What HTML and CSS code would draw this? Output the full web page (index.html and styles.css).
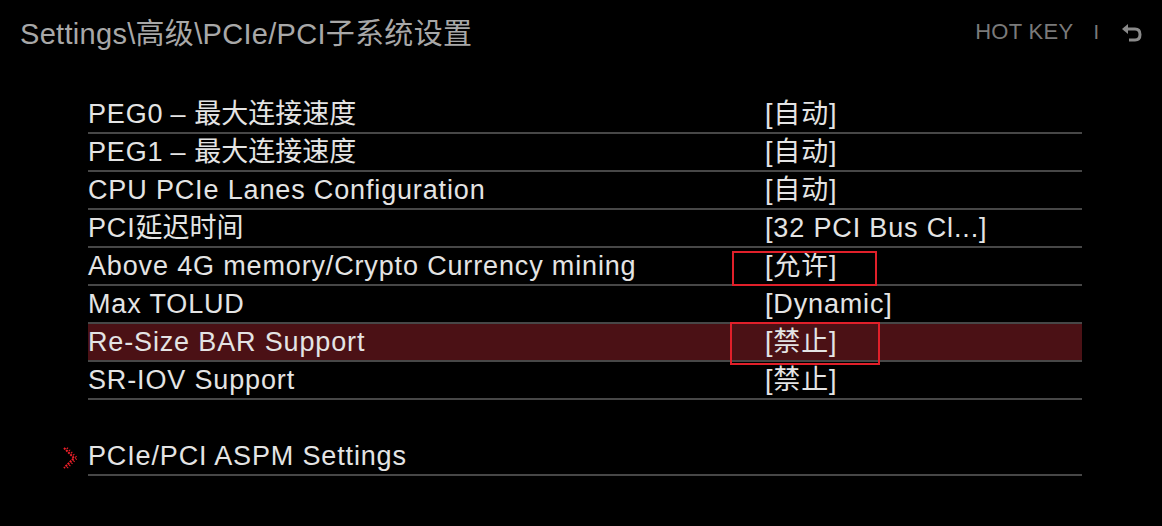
FILE: index.html
```html
<!DOCTYPE html>
<html lang="zh-CN">
<head>
<meta charset="utf-8">
<title>PCIe/PCI子系统设置</title>
<link rel="stylesheet" href="styles.css">
</head>
<body>
<header class="topbar">
  <div class="crumb">Settings\高级\PCIe/PCI子系统设置</div>
  <div class="hotkey">
    <span class="hk-label">HOT KEY</span>
    <span class="hk-sep">I</span>
    <svg class="hk-back" width="22" height="20" viewBox="0 0 22 20">
      <path d="M3 6 H14 Q19 6 19 11.5 Q19 17 14 17 H8" fill="none" stroke="#8a8a8a" stroke-width="3"/>
      <path d="M1 6 L7 1 L7 11 Z" fill="#8a8a8a"/>
    </svg>
  </div>
</header>

<main class="menu">
  <div class="row"><span class="label">PEG0<span class="dash">–</span><span class="cjk">最大连接速度</span></span><span class="value">[自动]</span></div>
  <div class="row"><span class="label">PEG1<span class="dash">–</span><span class="cjk">最大连接速度</span></span><span class="value">[自动]</span></div>
  <div class="row"><span class="label">CPU PCIe Lanes Configuration</span><span class="value">[自动]</span></div>
  <div class="row"><span class="label">PCI<span class="cjk">延迟时间</span></span><span class="value">[32 PCI Bus Cl...]</span></div>
  <div class="row"><span class="label">Above 4G memory/Crypto Currency mining</span><span class="value">[允许]<span class="mark mark-a"></span></span></div>
  <div class="row"><span class="label">Max TOLUD</span><span class="value">[Dynamic]</span></div>
  <div class="row row-active"><span class="label">Re-Size BAR Support</span><span class="value">[禁止]<span class="mark mark-b"></span></span></div>
  <div class="row"><span class="label">SR-IOV Support</span><span class="value">[禁止]</span></div>

  <div class="submenu">
    <svg class="chev" width="16" height="24" viewBox="0 0 16 24">
      <polyline points="2,2 12,12 2,22" fill="none" stroke="#f0202a" stroke-width="2" stroke-dasharray="2 1"/>
      <polyline points="5,2 15,12 5,22" fill="none" stroke="#f0202a" stroke-width="2" stroke-dasharray="1 2"/>
    </svg>
    <div class="row sub-row"><span class="label">PCIe/PCI ASPM Settings</span></div>
  </div>
</main>
</body>
</html>
```

FILE: styles.css
```css
* { box-sizing: border-box; }

html, body {
  margin: 0;
  padding: 0;
  background: #000;
}

body {
  width: 1162px;
  height: 526px;
  overflow: hidden;
  font-family: "Liberation Sans", "Noto Sans CJK SC", sans-serif;
  color: #e2e2e2;
}

.topbar {
  display: flex;
  justify-content: space-between;
  align-items: flex-start;
  padding: 19px 19px 0 20px;
  height: 96px;
}

.crumb {
  font-size: 29px;
  line-height: 30px;
  letter-spacing: 0.3px;
  color: #a8a8a8;
  white-space: nowrap;
}

.hotkey {
  display: flex;
  align-items: center;
  color: #7a7a7a;
  font-size: 22px;
  line-height: 26px;
}

.hk-label { letter-spacing: 0.3px; }

.hk-sep {
  margin-left: 20px;
  margin-right: 22px;
  font-size: 20px;
}

.hk-back {
  display: block;
  margin-top: 2px;
}

.menu {
  margin-left: 88px;
  width: 994px;
}

.row {
  display: flex;
  height: 38px;
  border-bottom: 2px solid #474747;
  font-size: 27px;
  line-height: 36px;
  letter-spacing: 0.85px;
  color: #e4e4e4;
  white-space: nowrap;
}

.row-active {
  background: #4b1115;
}

.label {
  width: 677px;
  flex: none;
}

.cjk { letter-spacing: 0; }

.dash {
  margin: 0 8px 0 7px;
}

.value {
  position: relative;
}

.mark {
  position: absolute;
  border: 2px solid #e0202a;
  pointer-events: none;
}

.mark-a {
  left: -33px;
  top: 3px;
  width: 145px;
  height: 35px;
}

.mark-b {
  left: -35px;
  top: -2px;
  width: 150px;
  height: 43px;
}

.submenu {
  display: flex;
  align-items: flex-start;
  margin-top: 38px;
  margin-left: -26px;
}

.chev {
  display: block;
  flex: none;
  width: 16px;
  margin: 8px 10px 0 0;
}

.sub-row {
  flex: 1;
}
```
